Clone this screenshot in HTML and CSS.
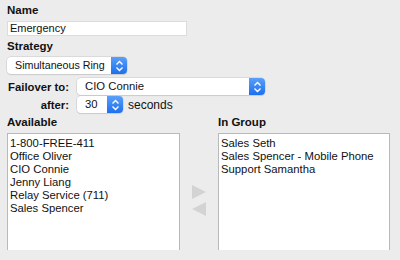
FILE: index.html
```html
<!DOCTYPE html>
<html lang="en">
<head>
    <meta charset="UTF-8">
    <title>Ring Group</title>
    <link rel="stylesheet" href="styles.css">
</head>
<body>
    <div class="panel">
        <div class="label">Name</div>
        <div class="textbox">Emergency</div>

        <div class="label">Strategy</div>
        <div class="select strategy">
            <span class="select-text">Simultaneous Ring</span>
            <span class="stepper">
                <svg width="9" height="12" viewBox="0 0 9 12"><path d="M1.5 4.5 L4.5 1.5 L7.5 4.5 M1.5 7.5 L4.5 10.5 L7.5 7.5" fill="none" stroke="#fff" stroke-width="1.4"/></svg>
            </span>
        </div>

        <div class="failover">
            <div class="row-label">Failover to:</div>
            <div class="select failover-to">
                <span class="select-text">CIO Connie</span>
                <span class="stepper">
                    <svg width="9" height="12" viewBox="0 0 9 12"><path d="M1.5 4.5 L4.5 1.5 L7.5 4.5 M1.5 7.5 L4.5 10.5 L7.5 7.5" fill="none" stroke="#fff" stroke-width="1.4"/></svg>
                </span>
            </div>
            <div class="row-label">after:</div>
            <div class="after">
                <div class="select seconds">
                    <span class="select-text">30</span>
                    <span class="stepper">
                        <svg width="9" height="12" viewBox="0 0 9 12"><path d="M1.5 4.5 L4.5 1.5 L7.5 4.5 M1.5 7.5 L4.5 10.5 L7.5 7.5" fill="none" stroke="#fff" stroke-width="1.4"/></svg>
                    </span>
                </div>
                <span class="unit">seconds</span>
            </div>
        </div>

        <div class="lists">
            <div class="list-col">
                <div class="label">Available</div>
                <ul class="listbox">
                    <li>1-800-FREE-411</li>
                    <li>Office Oliver</li>
                    <li>CIO Connie</li>
                    <li>Jenny Liang</li>
                    <li>Relay Service (711)</li>
                    <li>Sales Spencer</li>
                </ul>
            </div>
            <div class="arrows">
                <svg width="14" height="14" viewBox="0 0 14 14"><path d="M0 0 L14 7 L0 14 Z" fill="#d3d3d3"/></svg>
                <svg width="14" height="14" viewBox="0 0 14 14"><path d="M14 0 L0 7 L14 14 Z" fill="#d3d3d3"/></svg>
            </div>
            <div class="list-col">
                <div class="label">In Group</div>
                <ul class="listbox">
                    <li>Sales Seth</li>
                    <li>Sales Spencer - Mobile Phone</li>
                    <li>Support Samantha</li>
                </ul>
            </div>
        </div>
    </div>
</body>
</html>
```

FILE: styles.css
```css
body {
    margin: 0;
    background-color: #ececec;
    color: #111;
    font-family: "Liberation Sans", Arial, sans-serif;
    font-size: 11px;
}
.panel {
    padding: 3px 7px 0 7px;
}
.label {
    font-weight: bold;
    font-size: 11.5px;
    line-height: 15px;
    height: 16px;
}
.textbox {
    width: 174px;
    height: 13px;
    line-height: 13px;
    padding: 0 2px;
    margin: 2px 0 3px 0;
    background: #fff;
    border: 1px solid #dcdcdc;
    font-size: 11px;
}
.select {
    display: flex;
    align-items: stretch;
    height: 17px;
    background: #fff;
    border-radius: 4px;
    box-shadow: 0 0 0 0.5px #c8c8c8, 0 1px 1px rgba(0, 0, 0, 0.12);
    overflow: hidden;
}
.select-text {
    flex: 1;
    line-height: 17px;
    padding-left: 8px;
    white-space: nowrap;
    font-size: 11.3px;
}
.strategy .select-text {
    font-size: 10.7px;
}
.stepper {
    width: 16px;
    display: flex;
    align-items: center;
    justify-content: center;
    background: linear-gradient(#5a9ff8, #1c6ff0);
}
.strategy {
    width: 120px;
    margin-top: 2px;
}
.failover {
    display: grid;
    grid-template-columns: 62px auto;
    column-gap: 8px;
    row-gap: 1px;
    margin-top: 4px;
    align-items: center;
}
.row-label {
    font-weight: bold;
    font-size: 11.3px;
    text-align: right;
    white-space: nowrap;
}
.failover-to {
    width: 188px;
}
.after {
    display: flex;
    align-items: center;
    gap: 5px;
}
.seconds {
    width: 46px;
}
.unit {
    font-size: 12px;
}
.lists {
    display: grid;
    grid-template-columns: 173px 38px 172px;
    margin-top: 2px;
}
.listbox {
    list-style: none;
    margin: 2px 0 0 0;
    padding: 3px 2px 0 2px;
    height: 113px;
    background: #fff;
    border: 1px solid #b9b9b9;
    border-bottom: none;
    font-family: "Liberation Sans", Arial, sans-serif;
    font-size: 11.3px;
    line-height: 13px;
    overflow: hidden;
    white-space: nowrap;
}
.arrows {
    display: flex;
    flex-direction: column;
    align-items: center;
    justify-content: center;
    gap: 3px;
    padding-top: 36px;
}
```
